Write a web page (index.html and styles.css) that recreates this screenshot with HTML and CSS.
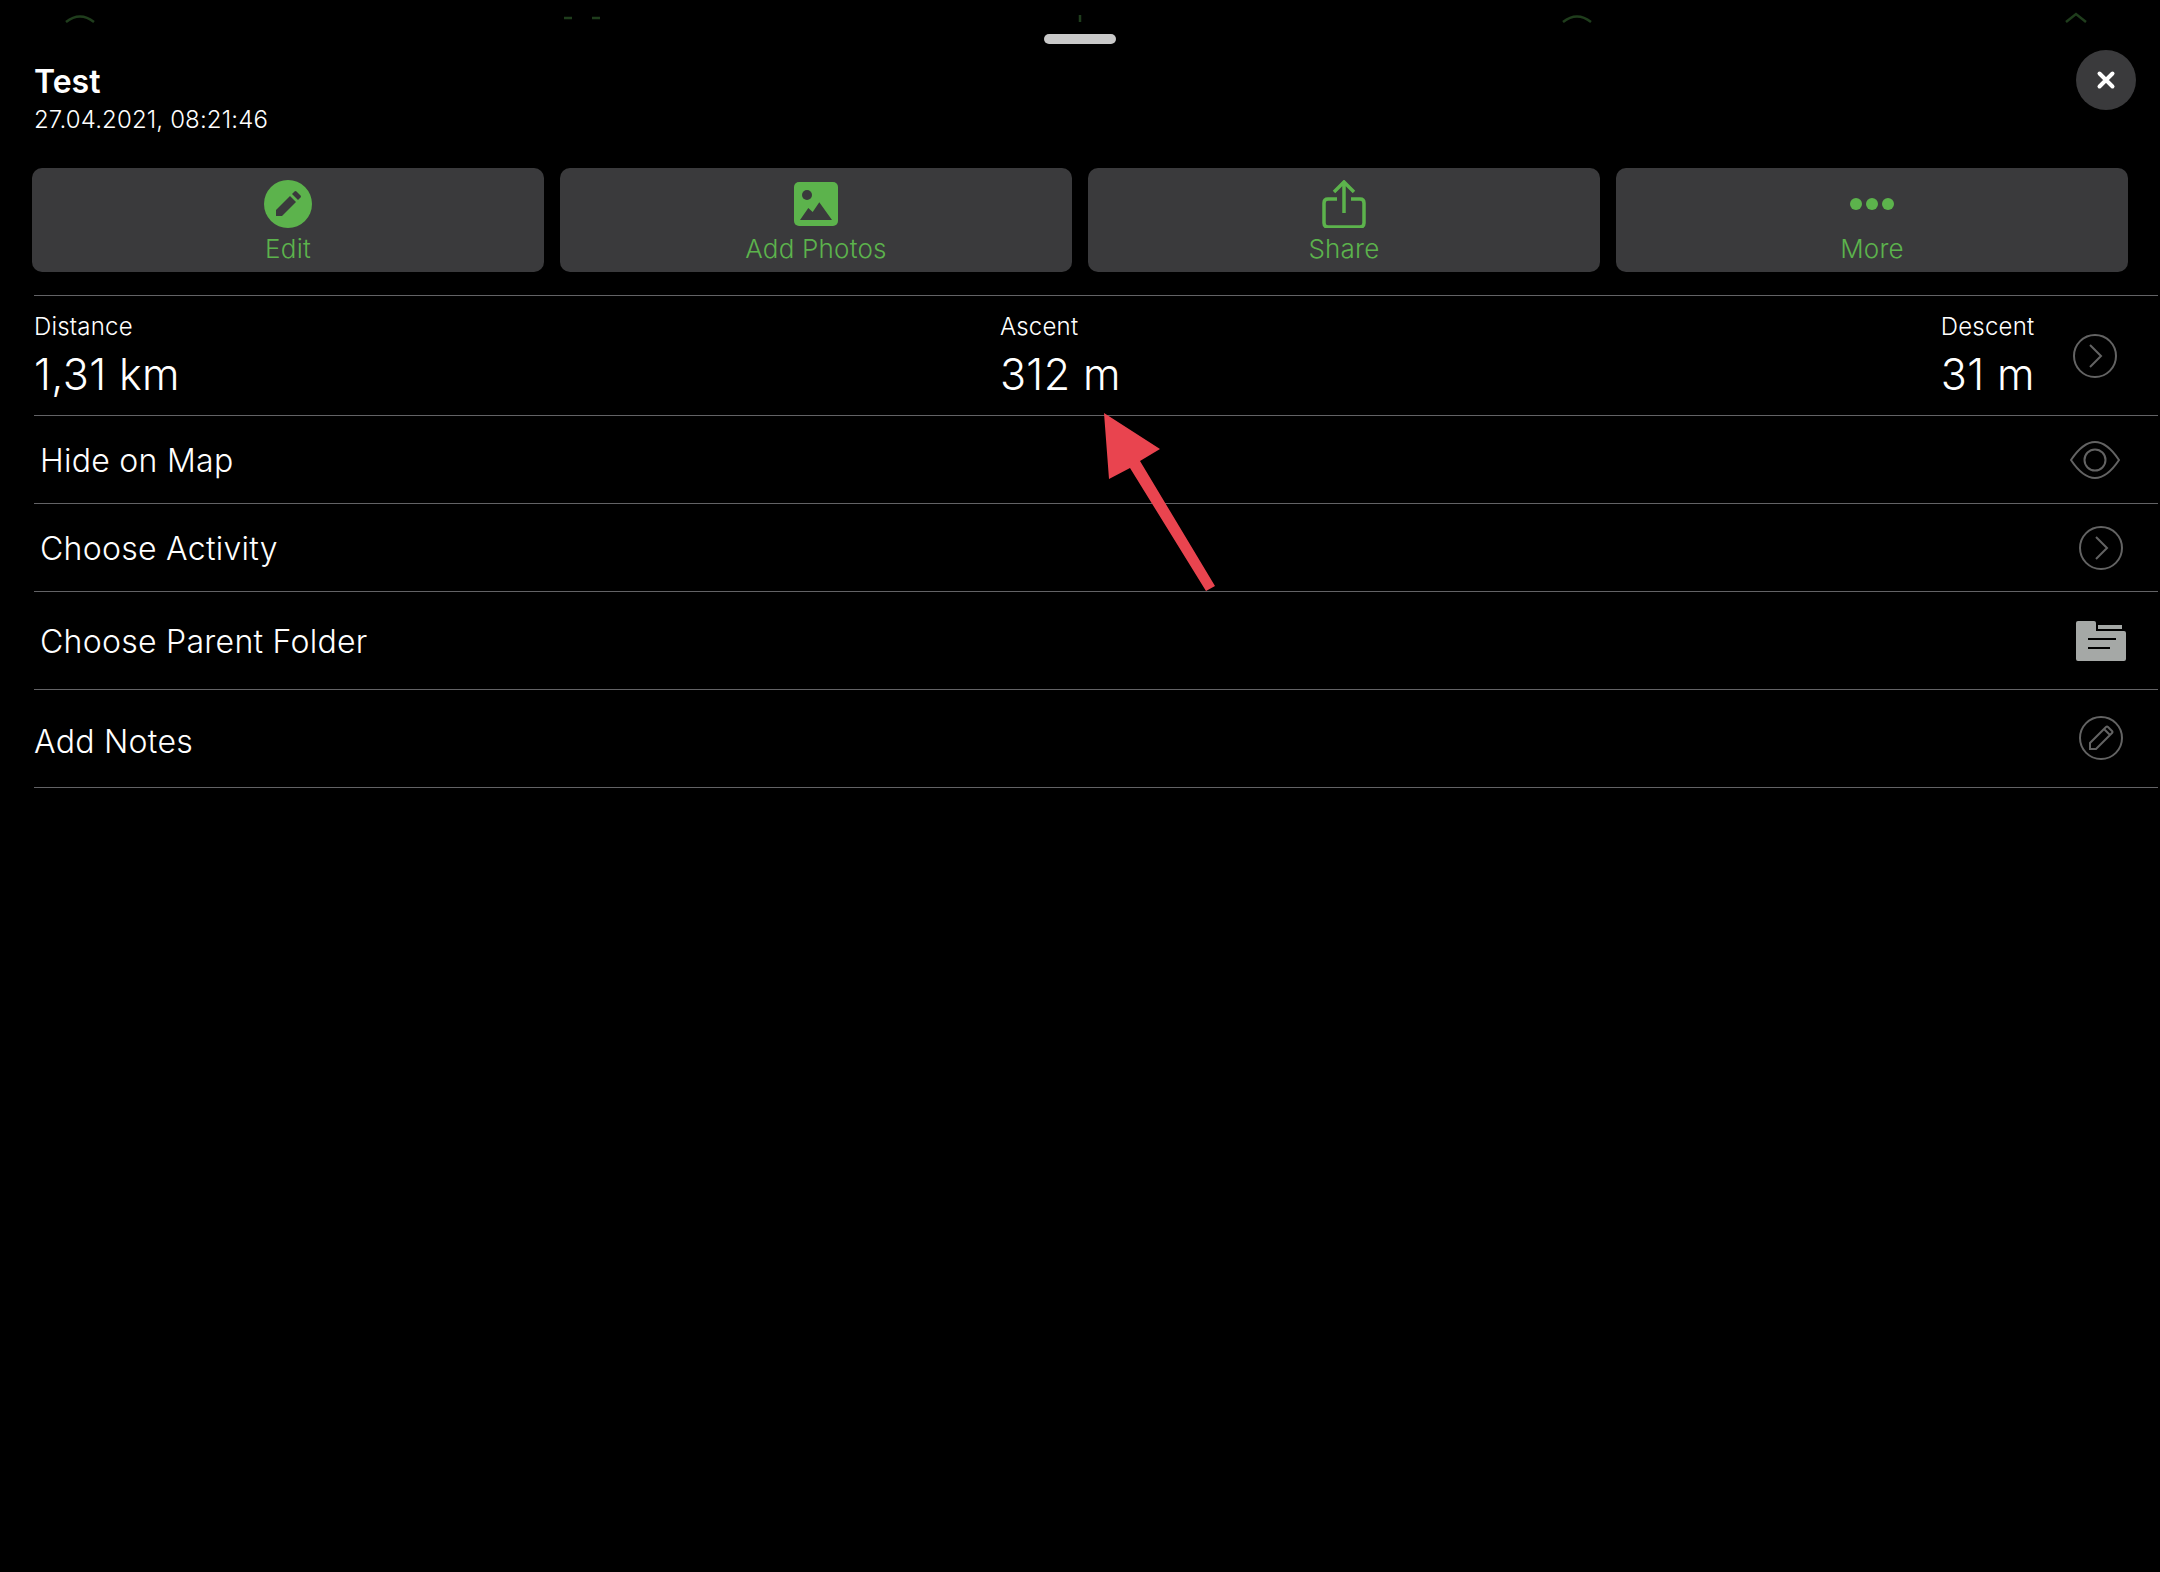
FILE: index.html
```html
<!DOCTYPE html>
<html lang="en">
<head>
    <meta charset="UTF-8">
    <title>Track details</title>
    <link rel="stylesheet" href="styles.css">
</head>
<body>
    <!-- tab icons of the page behind the sheet, cut off by its top edge -->
    <svg class="behind" width="2160" height="23" viewBox="0 0 2160 23">
        <path d="M66 22 Q80 11 94 22" />
        <path d="M564 18h8M592 18h8" />
        <path d="M1080 22V15" />
        <path d="M1563 22 Q1577 11 1591 22" />
        <path d="M2066 22 L2076 14 L2086 22" />
    </svg>

    <div class="sheet">
        <div class="handle"></div>

        <div class="header">
            <div>
                <div class="title">Test</div>
                <div class="date">27.04.2021, 08:21:46</div>
            </div>
            <button class="close" aria-label="Close">
                <svg width="24" height="24" viewBox="0 0 24 24"><path d="M5.5 5.5l13 13M18.5 5.5l-13 13" /></svg>
            </button>
        </div>

        <div class="actions">
            <button class="action">
                <svg width="48" height="48" viewBox="0 0 48 48">
                    <circle cx="24" cy="24" r="24" fill="#5cb34c" />
                    <path d="M12 36V30L26 16 32 22 18 36Z" fill="#3a3a3c" />
                    <path d="M28 14L30.500 11.500Q31.500 10.500 32.500 11.500L36.500 15.500Q37.500 16.500 36.500 17.500L34 20Z" fill="#3a3a3c" />
                </svg>
                <span>Edit</span>
            </button>
            <button class="action">
                <svg width="48" height="48" viewBox="0 0 48 48">
                    <rect x="2" y="2" width="44" height="44" rx="5" fill="#5cb34c" />
                    <circle cx="15" cy="15" r="5" fill="#3a3a3c" />
                    <path d="M8 40L16.300 28 20.700 32 27.300 22.300 40 40Z" fill="#3a3a3c" />
                </svg>
                <span>Add Photos</span>
            </button>
            <button class="action">
                <svg width="48" height="48" viewBox="0 0 48 48" fill="none" stroke="#5cb34c" stroke-width="3.500">
                    <path d="M17 19H8Q4 19 4 23V43Q4 47 8 47H40Q44 47 44 43V23Q44 19 40 19H31" />
                    <path d="M24 33V2M14 12L24 2 34 12" />
                </svg>
                <span>Share</span>
            </button>
            <button class="action">
                <svg width="48" height="48" viewBox="0 0 48 48" fill="#5cb34c">
                    <circle cx="8" cy="24" r="6" />
                    <circle cx="24" cy="24" r="6" />
                    <circle cx="40" cy="24" r="6" />
                </svg>
                <span>More</span>
            </button>
        </div>

        <div class="list">
            <div class="row stats-row">
                <div class="stats">
                    <div class="stat">
                        <div class="stat-label">Distance</div>
                        <div class="stat-value">1,31 km</div>
                    </div>
                    <div class="stat">
                        <div class="stat-label">Ascent</div>
                        <div class="stat-value">312 m</div>
                    </div>
                    <div class="stat">
                        <div class="stat-label">Descent</div>
                        <div class="stat-value">31 m</div>
                    </div>
                </div>
                <svg class="icon" width="44" height="44" viewBox="0 0 44 44">
                    <circle cx="22" cy="22" r="21" />
                    <path d="M17 11L28 22 17 33" />
                </svg>
            </div>

            <div class="row row-small">
                <span class="row-text">Hide on Map</span>
                <svg class="icon icon-eye" width="50" height="38" viewBox="0 0 50 38">
                    <path d="M1 19Q13 1 25 1T49 19Q37 37 25 37T1 19Z" />
                    <circle cx="25" cy="19" r="10.500" />
                </svg>
            </div>

            <div class="row row-small">
                <span class="row-text">Choose Activity</span>
                <svg class="icon icon-chevron" width="44" height="44" viewBox="0 0 44 44">
                    <circle cx="22" cy="22" r="21" />
                    <path d="M17 11L28 22 17 33" />
                </svg>
            </div>

            <div class="row row-big">
                <span class="row-text row-text-low">Choose Parent Folder</span>
                <svg class="icon-folder" width="50" height="40" viewBox="0 0 50 40">
                    <path d="M2 0H18Q20 0 20 2V10H48Q50 10 50 12V38Q50 40 48 40H2Q0 40 0 38V2Q0 0 2 0Z" fill="#a5a8a6" />
                    <path d="M22 4H46V8H22Z" fill="#a5a8a6" />
                    <path d="M12 18H40M12 27H34" stroke="#000" stroke-width="2" />
                </svg>
            </div>

            <div class="row row-big">
                <span class="row-text row-text-flush">Add Notes</span>
                <svg class="icon icon-pencil" width="44" height="44" viewBox="0 0 44 44">
                    <circle cx="22" cy="22" r="21" />
                    <path d="M11 33V27L27 11Q28 10 29 11L33 15Q34 16 33 17L17 33ZM25 13L31 19" />
                </svg>
            </div>
        </div>
    </div>

    <!-- annotation drawn on top of the screenshot -->
    <svg class="arrow" width="2160" height="1572" viewBox="0 0 2160 1572">
        <path d="M1104 413L1160 449 1140 461 1215 586 1206 591 1130 468 1109 479Z" fill="#e9444f" />
    </svg>
</body>
</html>
```

FILE: styles.css
```css
body {
    margin: 0;
    background: #000;
    color: #fff;
    font-family: Inter, "Liberation Sans", sans-serif;
}
button {
    font-family: inherit;
    border: none;
    cursor: pointer;
}
.behind {
    position: absolute;
    top: 0;
    left: 0;
    fill: none;
    stroke: #1f3d1c;
    stroke-width: 2.500;
}
.sheet {
    padding-top: 34px;
}
.handle {
    width: 72px;
    height: 10px;
    margin: 0 auto 6px;
    border-radius: 5px;
    background: #c9c9c9;
}
.header {
    display: flex;
    justify-content: space-between;
    align-items: flex-start;
    padding: 0 24px 0 34px;
    margin-bottom: 33px;
}
.title {
    margin-top: 12px;
    font-size: 32px;
    font-weight: 600;
    line-height: 40px;
}
.date {
    margin-top: 3px;
    font-size: 24px;
    font-weight: 300;
    letter-spacing: 0.14px;
    line-height: 30px;
}
.close {
    display: flex;
    align-items: center;
    justify-content: center;
    width: 60px;
    height: 60px;
    padding: 0;
    border-radius: 50%;
    background: #3a3a3c;
}
.close path {
    fill: none;
    stroke: #fff;
    stroke-width: 4;
    stroke-linecap: round;
}
.actions {
    display: flex;
    gap: 16px;
    padding: 0 32px;
    margin-bottom: 23px;
}
.action {
    flex: 1;
    display: flex;
    flex-direction: column;
    align-items: center;
    height: 104px;
    padding: 12px 0 0;
    border-radius: 10px;
    background: #3a3a3c;
    color: #5cb34c;
    font-size: 26px;
    font-weight: 300;
    letter-spacing: 0.2px;
    line-height: 36px;
}
.action svg {
    display: block;
    margin-bottom: 3px;
}
.list {
    margin: 0 2px 0 34px;
}
.row {
    display: flex;
    align-items: center;
    justify-content: space-between;
    box-sizing: border-box;
    padding-right: 33px;
    border-top: 1px solid #636366;
}
.row-small {
    height: 88px;
}
.row-big {
    height: 98px;
}
.row:last-child {
    height: 99px;
    border-bottom: 1px solid #636366;
}
.row-text {
    margin-left: 6px;
    margin-top: 2px;
    font-size: 32px;
    font-weight: 300;
    letter-spacing: 0.28px;
    line-height: 40px;
}
.row-text-low {
    margin-top: 3px;
}
.row-text-flush {
    margin-left: 0;
    margin-top: 7px;
}
.stats-row {
    height: 120px;
    padding-right: 41px;
}
.stats {
    flex: 1;
    display: flex;
    justify-content: space-between;
    margin-right: 38px;
}
.stat-label {
    margin-top: -3px;
    font-size: 24px;
    font-weight: 300;
    letter-spacing: 0.2px;
    line-height: 30px;
}
.stat-value {
    margin-top: 9px;
    font-size: 43px;
    font-weight: 300;
    letter-spacing: 0.4px;
    line-height: 46px;
}
.icon {
    fill: none;
    stroke: #636363;
    stroke-width: 2;
}
.icon-eye {
    margin-right: 5px;
}
.icon-chevron {
    margin-right: 2px;
    margin-top: 1px;
}
.icon-pencil {
    margin-right: 2px;
    margin-top: -1px;
}
.icon-folder {
    margin-right: -1px;
}
.arrow {
    position: absolute;
    top: 0;
    left: 0;
    pointer-events: none;
}
```
